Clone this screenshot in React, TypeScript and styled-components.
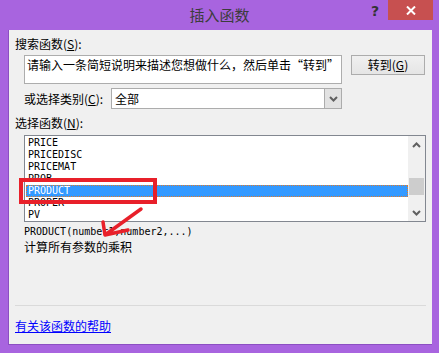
import styled, { createGlobalStyle } from 'styled-components';

const GlobalStyle = createGlobalStyle`
  html, body {
    margin: 0;
    padding: 0;
    background: #ffffff;
  }
  body {
    font-family: "Noto Sans CJK SC", "DejaVu Sans", sans-serif;
  }
`;

const Window = styled.div`
  position: relative;
  width: 439px;
  height: 353px;
  background: #a864df;
  display: flex;
  flex-direction: column;
  overflow: hidden;
`;

const TitleBar = styled.div`
  height: 30px;
  display: flex;
  align-items: flex-start;
  position: relative;
`;

const Title = styled.div`
  position: absolute;
  left: 0;
  right: 0;
  top: 5px;
  text-align: center;
  font-size: 15px;
  line-height: 20px;
  color: #3c3c3c;
`;

const HelpButton = styled.div`
  position: absolute;
  left: 369px;
  top: 1px;
  width: 12px;
  font-family: "DejaVu Sans", sans-serif;
  font-weight: bold;
  font-size: 14px;
  line-height: 20px;
  color: #333333;
  text-align: center;
`;

const CloseButton = styled.div`
  position: absolute;
  left: 388px;
  top: 0;
  width: 45px;
  height: 20px;
  background: #c75050;
  display: flex;
  align-items: center;
  justify-content: center;
`;

const Client = styled.div`
  margin-left: 8px;
  width: 424px;
  height: 315px;
  box-sizing: border-box;
  background: #f0f0f0;
  border-left: 1px solid #8c4fc2;
  border-bottom: 1px solid #8c4fc2;
  display: flex;
  flex-direction: column;
  padding-left: 6px;
  padding-right: 6px;
`;

const Label = styled.div<{ $top: number; $indent?: boolean }>`
  margin-top: ${(p) => p.$top}px;
  margin-left: ${(p) => (p.$indent ? 9 : 0)}px;
  font-size: 12px;
  line-height: 14px;
  height: 14px;
  color: #000000;
  white-space: nowrap;
`;

const Key = styled.span`
  text-decoration: underline;
`;

const Row = styled.div<{ $top: number }>`
  margin-top: ${(p) => p.$top}px;
  margin-left: 9px;
  display: flex;
  align-items: flex-start;
`;

const SearchBox = styled.div`
  width: 318px;
  height: 29px;
  box-sizing: border-box;
  border: 1px solid #adadad;
  background: #ffffff;
  padding: 2px 0 0 2px;
  font-size: 12px;
  line-height: 14px;
  color: #000000;
  white-space: nowrap;
  overflow: hidden;
`;

const PushButton = styled.div`
  margin-left: 9px;
  width: 74px;
  height: 20px;
  box-sizing: border-box;
  border: 1px solid #acacac;
  background: linear-gradient(#f0f0f0, #e5e5e5);
  font-size: 12px;
  line-height: 18px;
  text-align: center;
  color: #000000;
`;

const CategoryRow = styled(Row)`
  align-items: center;
  height: 21px;
`;

const CategoryLabel = styled.div`
  width: 87px;
  font-size: 12px;
  line-height: 14px;
  white-space: nowrap;
`;

const Select = styled.div`
  width: 231px;
  height: 21px;
  box-sizing: border-box;
  border: 1px solid #acacac;
  background: #ffffff;
  display: flex;
`;

const SelectText = styled.div`
  flex: 1;
  padding-left: 3px;
  font-size: 12px;
  line-height: 19px;
`;

const SelectArrow = styled.div`
  width: 17px;
  box-sizing: border-box;
  border-left: 1px solid #acacac;
  background: #e2e2e2;
  display: flex;
  align-items: center;
  justify-content: center;
`;

const ListBox = styled.div`
  margin-top: 5px;
  margin-left: 9px;
  width: 402px;
  height: 87px;
  box-sizing: border-box;
  border: 1px solid #828790;
  background: #ffffff;
  display: flex;
`;

const ListItems = styled.div`
  flex: 1;
  padding: 1px 0 0 1px;
`;

const ListItem = styled.div<{ $selected?: boolean }>`
  height: 12px;
  box-sizing: border-box;
  padding-left: 2px;
  font-family: "DejaVu Sans Mono", "Liberation Mono", monospace;
  font-size: 10px;
  line-height: 12px;
  color: ${(p) => (p.$selected ? '#ffffff' : '#000000')};
  background: ${(p) => (p.$selected ? '#3399ff' : 'transparent')};
  outline: ${(p) => (p.$selected ? '1px dotted #e07b2a' : 'none')};
  outline-offset: -1px;
`;

const ScrollBar = styled.div`
  width: 17px;
  background: #f0f0f0;
  display: flex;
  flex-direction: column;
  align-items: center;
`;

const ScrollArrow = styled.div`
  height: 17px;
  display: flex;
  align-items: center;
  justify-content: center;
`;

const ScrollTrack = styled.div`
  flex: 1;
  width: 100%;
  display: flex;
  flex-direction: column;
`;

const ScrollThumb = styled.div`
  margin-top: 25px;
  margin-left: 1px;
  width: 15px;
  height: 17px;
  background: #cdcdcd;
`;

const Syntax = styled.div`
  margin-top: 3px;
  margin-left: 9px;
  font-family: "DejaVu Sans Mono", "Liberation Mono", monospace;
  font-size: 10px;
  line-height: 14px;
  color: #000000;
`;

const Separator = styled.div`
  margin-top: 51px;
  height: 1px;
  width: 411px;
  background: #dadada;
`;

const HelpLink = styled.a`
  margin-top: 13px;
  font-size: 12px;
  line-height: 14px;
  color: #0000ff;
  text-decoration: underline;
  align-self: flex-start;
`;

const RedBox = styled.div`
  position: absolute;
  left: 19px;
  top: 178px;
  width: 138px;
  height: 26px;
  box-sizing: border-box;
  border: 4px solid #e8202a;
`;

const ArrowMark = styled.svg`
  position: absolute;
  left: 95px;
  top: 202px;
`;

const Chevron = ({ up }: { up?: boolean }) => (
  <svg width="9" height="6" viewBox="0 0 9 6">
    <polyline
      points={up ? '1,5 4.5,1.5 8,5' : '1,1 4.5,4.5 8,1'}
      fill="none"
      stroke="#606060"
      strokeWidth="2"
    />
  </svg>
);

const functions = ['PRICE', 'PRICEDISC', 'PRICEMAT', 'PROB', 'PRODUCT', 'PROPER', 'PV'];

const App = () => (
  <>
    <GlobalStyle />
    <Window>
      <TitleBar>
        <Title>插入函数</Title>
        <HelpButton>?</HelpButton>
        <CloseButton>
          <svg width="10" height="9" viewBox="0 0 10 9">
            <path d="M1 0.5 L9 8.5 M9 0.5 L1 8.5" stroke="#ffffff" strokeWidth="2" />
          </svg>
        </CloseButton>
      </TitleBar>
      <Client>
        <Label $top={7}>
          搜索函数(<Key>S</Key>):
        </Label>
        <Row $top={4}>
          <SearchBox>请输入一条简短说明来描述您想做什么，然后单击“转到”</SearchBox>
          <PushButton>
            转到(<Key>G</Key>)
          </PushButton>
        </Row>
        <CategoryRow $top={4}>
          <CategoryLabel>
            或选择类别(<Key>C</Key>):
          </CategoryLabel>
          <Select>
            <SelectText>全部</SelectText>
            <SelectArrow>
              <Chevron />
            </SelectArrow>
          </Select>
        </CategoryRow>
        <Label $top={7}>
          选择函数(<Key>N</Key>):
        </Label>
        <ListBox>
          <ListItems>
            {functions.map((name) => (
              <ListItem key={name} $selected={name === 'PRODUCT'}>
                {name}
              </ListItem>
            ))}
          </ListItems>
          <ScrollBar>
            <ScrollArrow>
              <Chevron up />
            </ScrollArrow>
            <ScrollTrack>
              <ScrollThumb />
            </ScrollTrack>
            <ScrollArrow>
              <Chevron />
            </ScrollArrow>
          </ScrollBar>
        </ListBox>
        <Syntax>PRODUCT(number1,number2,...)</Syntax>
        <Label $top={1} $indent>
          计算所有参数的乘积
        </Label>
        <Separator />
        <HelpLink>有关该函数的帮助</HelpLink>
      </Client>
      <RedBox />
      <ArrowMark width="50" height="40" viewBox="0 0 50 40">
        <path
          d="M46 7 L10 33 M10 33 L8 20 M10 33 L33 28"
          fill="none"
          stroke="#e8202a"
          strokeWidth="3.5"
          strokeLinecap="round"
        />
      </ArrowMark>
    </Window>
  </>
);

export default App;
